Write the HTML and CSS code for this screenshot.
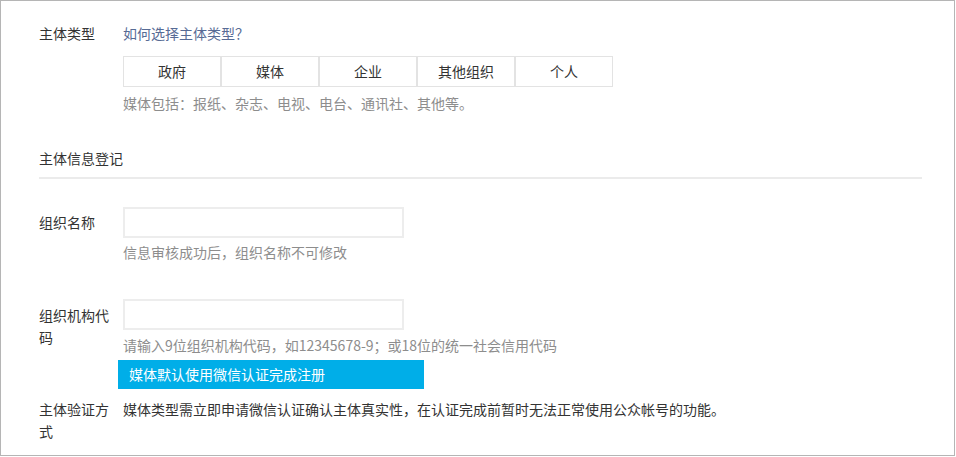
FILE: index.html
```html
<!DOCTYPE html>
<html lang="zh-CN">
<head>
<meta charset="utf-8">
<title>主体信息</title>
<link rel="stylesheet" href="styles.css">
</head>
<body>
<div class="frame">
  <div class="row row-type">
    <div class="label">主体类型</div>
    <div class="field">
      <a class="link" href="#">如何选择主体类型？</a>
      <div class="segs">
        <div class="seg">政府</div>
        <div class="seg">媒体</div>
        <div class="seg">企业</div>
        <div class="seg">其他组织</div>
        <div class="seg">个人</div>
      </div>
      <div class="hint hint-type">媒体包括：报纸、杂志、电视、电台、通讯社、其他等。</div>
    </div>
  </div>

  <div class="section-title">主体信息登记</div>

  <div class="row row-name">
    <div class="label label-input">组织名称</div>
    <div class="field">
      <div class="input"></div>
      <div class="hint hint-input">信息审核成功后，组织名称不可修改</div>
    </div>
  </div>

  <div class="row row-code">
    <div class="label label-input">组织机构代码</div>
    <div class="field">
      <div class="input"></div>
      <div class="hint hint-code">请输入9位组织机构代码，如12345678-9；或18位的统一社会信用代码</div>
      <div class="notice">媒体默认使用微信认证完成注册</div>
    </div>
  </div>

  <div class="row row-verify">
    <div class="label">主体验证方式</div>
    <div class="field">
      <div class="text">媒体类型需立即申请微信认证确认主体真实性，在认证完成前暂时无法正常使用公众帐号的功能。</div>
    </div>
  </div>
</div>
</body>
</html>
```

FILE: styles.css
```css
html, body {
  margin: 0;
  padding: 0;
  background: #ffffff;
}

.frame {
  width: 955px;
  height: 456px;
  box-sizing: border-box;
  border: 1px solid #b5b5b5;
  padding: 21px 32px 0 38px;
  font-family: "Noto Sans CJK SC", "Noto Sans", sans-serif;
  font-size: 14px;
  line-height: 22px;
  color: #333333;
  overflow: hidden;
}

.row {
  display: flex;
  align-items: flex-start;
}

.label {
  width: 74px;
  margin-right: 10px;
  flex-shrink: 0;
  color: #333333;
}

.label-input {
  padding-top: 4px;
}

.field {
  flex: 1;
  min-width: 0;
}

.link {
  display: block;
  color: #576b95;
  text-decoration: none;
}

.segs {
  display: flex;
  margin-top: 12px;
}

.seg {
  width: 98px;
  height: 31px;
  box-sizing: border-box;
  border: 1px solid #e3e3e3;
  text-align: center;
  line-height: 29px;
  color: #333333;
}

.hint {
  color: #8d8d8d;
}

.hint-type {
  margin-top: 5px;
}

.section-title {
  margin-top: 33px;
  padding-bottom: 8px;
  border-bottom: 2px solid #ebebeb;
  color: #333333;
}

.row-name {
  margin-top: 28px;
}

.input {
  width: 281px;
  height: 31px;
  box-sizing: border-box;
  border: 2px solid #ededed;
  background: #ffffff;
}

.hint-input {
  margin-top: 3px;
}

.row-code {
  margin-top: 36px;
}

.row-code .label-input {
  padding-top: 5px;
}

.hint-code {
  margin-top: 4px;
}

.notice {
  width: 306px;
  height: 29px;
  margin-left: -5px;
  margin-top: 4px;
  box-sizing: border-box;
  padding-left: 11px;
  background: #00aee8;
  color: #ffffff;
  line-height: 29px;
}

.row-verify {
  margin-top: 9px;
}

.text {
  color: #333333;
}
```
